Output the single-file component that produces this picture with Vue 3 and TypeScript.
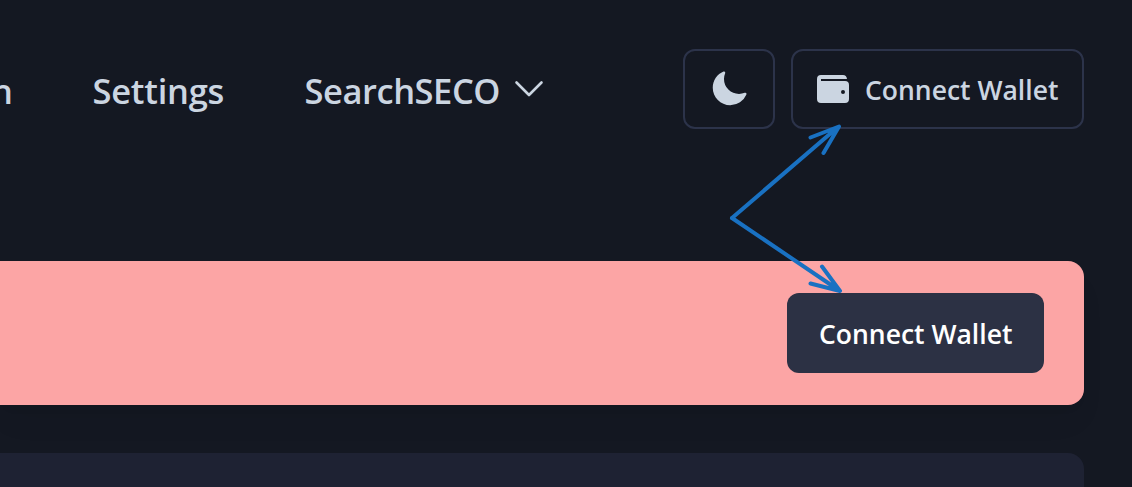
<script setup lang="ts">
const walletLabel: string = 'Connect Wallet'
const arrows: string[] = [
  'M732 218 L838 127 M810.5 137.5 L839 126.5 L823.5 153',
  'M732 218 L840 291 M822 266.5 L840 291 L810.5 283.5',
]
</script>

<template>
  <div class="page">
    <header class="bar">
      <nav class="nav">
        <a class="link clipped">n</a>
        <a class="link settings">Settings</a>
        <a class="link seco">
          <span class="seco-text">SearchSECO</span>
          <svg class="chevron" width="30" height="18" viewBox="0 0 30 18">
            <path d="M2.5 2.5 L15 15 L27.5 2.5" />
          </svg>
        </a>
      </nav>
      <div class="actions">
        <button class="outline theme" aria-label="Theme">
          <svg width="40" height="40" viewBox="0 0 24 24">
            <path
              fill-rule="evenodd"
              d="M9.528 1.718a.75.75 0 01.162.819A8.97 8.97 0 009 6a9 9 0 009 9 8.97 8.97 0 003.463-.69.75.75 0 01.981.98 10.503 10.503 0 01-9.694 6.46c-5.799 0-10.5-4.701-10.5-10.5 0-4.368 2.667-8.112 6.46-9.694a.75.75 0 01.818.162z"
            />
          </svg>
        </button>
        <button class="outline wallet">
          <svg width="32" height="28" viewBox="0 0 32 28">
            <path
              fill-rule="evenodd"
              d="M4 0H26Q29.5 0 30 4H4V6H28Q32 6 32 10V24Q32 28 28 28H4Q0 28 0 24V4Q0 0 4 0ZM26 15a2 2 0 100 4 2 2 0 000-4z"
            />
          </svg>
          <span class="label">{{ walletLabel }}</span>
        </button>
      </div>
    </header>
    <section class="banner">
      <button class="solid"><span class="label">{{ walletLabel }}</span></button>
    </section>
    <section class="card"></section>
    <svg class="arrows" width="1132" height="487" viewBox="0 0 1132 487">
      <path v-for="d in arrows" :key="d" :d="d" />
    </svg>
  </div>
</template>

<style>
body {
  margin: 0;
  background: #141822;
}
</style>

<style scoped>
.page {
  position: relative;
  box-sizing: border-box;
  width: 1132px;
  height: 487px;
  padding: 49px 48px 0 0;
  overflow: hidden;
  background: #141822;
  font-family: "Open Sans", "Noto Sans", sans-serif;
  font-weight: 620;
  color: #cbd5e1;
}
.bar {
  display: flex;
  justify-content: space-between;
  height: 80px;
}
.nav {
  display: flex;
  align-items: center;
  height: 84px;
  font-size: 34.5px;
  line-height: 48px;
  white-space: nowrap;
}
.link {
  display: flex;
}
.clipped {
  justify-content: flex-end;
  width: 13px;
}
.settings {
  width: 132px;
  margin-left: 79.5px;
  letter-spacing: -0.25px;
}
.seco {
  align-items: center;
  margin-left: 80px;
}
.seco-text {
  width: 195.5px;
  letter-spacing: -0.45px;
}
.chevron {
  margin: -4px 0 0 14px;
  fill: none;
  stroke: #cbd5e1;
  stroke-width: 2.6;
  stroke-linecap: round;
  stroke-linejoin: round;
}
.actions {
  display: flex;
  gap: 16px;
}
button {
  display: flex;
  align-items: center;
  box-sizing: border-box;
  height: 80px;
  padding: 0;
  border: 0;
  border-radius: 12px;
  font: inherit;
  font-size: 26.5px;
  line-height: 40px;
  color: inherit;
  white-space: nowrap;
}
.outline {
  border: 2px solid #2c334a;
  background: transparent;
}
.outline svg {
  flex: none;
  fill: #cbd5e1;
}
.theme {
  justify-content: center;
  width: 92px;
}
.wallet {
  width: 293px;
  padding-left: 24px;
  gap: 16px;
}
.label {
  padding-top: 2px;
}
.banner {
  display: flex;
  justify-content: flex-end;
  box-sizing: border-box;
  height: 144px;
  margin-top: 132px;
  padding: 32px 40px 0 0;
  border-radius: 0 16px 16px 0;
  background: #fca5a5;
  box-shadow: 0 20px 30px -6px rgba(0, 0, 0, 0.06), 0 8px 12px -8px rgba(0, 0, 0, 0.08);
}
.solid {
  width: 257px;
  padding-left: 32px;
  background: #2c3144;
  color: #fff;
}
.card {
  position: relative;
  height: 80px;
  margin-top: 48px;
  border-radius: 0 16px 0 0;
  background: #1e2233;
}
.arrows {
  position: absolute;
  top: 0;
  left: 0;
  fill: none;
  stroke: #1971c2;
  stroke-width: 4;
  stroke-linecap: round;
  stroke-linejoin: round;
}
</style>
